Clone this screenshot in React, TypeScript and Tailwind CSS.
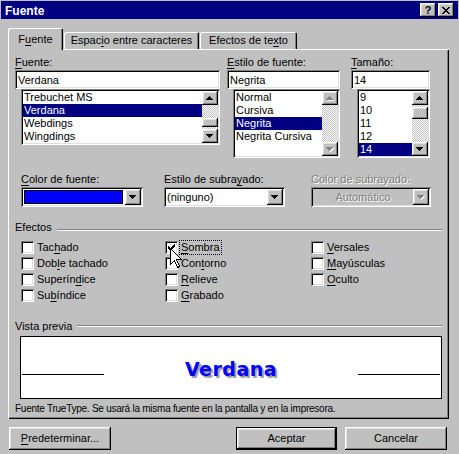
import React from 'react'

// classic 3D borders
const raised = 'shadow-[inset_-1px_-1px_#000,inset_1px_1px_#fff,inset_-2px_-2px_#808080,inset_2px_2px_#dfdfdf]'
const sunken = 'shadow-[inset_1px_1px_#808080,inset_-1px_-1px_#fff,inset_2px_2px_#000,inset_-2px_-2px_#dfdfdf]'
const dither = 'bg-[image:repeating-conic-gradient(#c0c0c0_0_25%,#fff_0_50%)] bg-[length:2px_2px]'
const grayed = 'text-[#808080] [text-shadow:1px_1px_0_#fff]'

function U({ children }: { children: React.ReactNode }) {
  return <span className="underline decoration-1 underline-offset-[2px]">{children}</span>
}

function Tri({ up = false, disabled = false }: { up?: boolean; disabled?: boolean }) {
  const d = up
    ? 'M3 0h1v1H3zM2 1h3v1H2zM1 2h5v1H1zM0 3h7v1H0z'
    : 'M0 0h7v1H0zM1 1h5v1H1zM2 2h3v1H2zM3 3h1v1H3z'
  return (
    <svg width="8" height="5" viewBox="0 0 8 5" shapeRendering="crispEdges">
      {disabled && <path d={d} transform="translate(1 1)" fill="#fff" />}
      <path d={d} fill={disabled ? '#808080' : '#000'} />
    </svg>
  )
}

function ScrollBtn({ up = false, disabled = false }: { up?: boolean; disabled?: boolean }) {
  return (
    <div className={`w-[16px] h-[14px] shrink-0 bg-[#c0c0c0] flex items-center justify-center ${raised}`}>
      <Tri up={up} disabled={disabled} />
    </div>
  )
}

function Thumb({ h }: { h: string }) {
  return <div className={`w-[16px] shrink-0 bg-[#c0c0c0] ${h} ${raised}`} />
}

function ListBox({
  items,
  selected,
  className,
  children,
}: {
  items: string[]
  selected: string
  className: string
  children: React.ReactNode
}) {
  return (
    <div className={`flex p-[2px] bg-white ${sunken} ${className}`}>
      <div className="flex-1 min-w-0 overflow-hidden">
        {items.map((it) => (
          <div
            key={it}
            className={`h-[13px] pl-[1px] whitespace-nowrap ${it === selected ? 'bg-[#000080] text-white' : ''}`}
          >
            {it}
          </div>
        ))}
      </div>
      <div className="w-[16px] flex flex-col">{children}</div>
    </div>
  )
}

function Field({ children, className }: { children: React.ReactNode; className: string }) {
  return (
    <div className={`h-[19px] bg-white flex items-center pl-[3px] pt-[1px] ${sunken} ${className}`}>{children}</div>
  )
}

function Combo({
  children,
  disabled = false,
  className,
}: {
  children: React.ReactNode
  disabled?: boolean
  className: string
}) {
  return (
    <div className={`h-[20px] flex p-[2px] ${disabled ? 'bg-[#c0c0c0]' : 'bg-white'} ${sunken} ${className}`}>
      <div className="flex-1 min-w-0 flex items-center">{children}</div>
      <div className={`w-[16px] shrink-0 bg-[#c0c0c0] flex items-center justify-center ${raised}`}>
        <Tri disabled={disabled} />
      </div>
    </div>
  )
}

function Check({ label, checked = false, focus = false }: { label: React.ReactNode; checked?: boolean; focus?: boolean }) {
  return (
    <div className="flex items-center h-[13px]">
      <div className={`w-[13px] h-[13px] shrink-0 bg-white flex items-center justify-center ${sunken}`}>
        {checked && (
          <svg width="7" height="7" viewBox="0 0 7 7" shapeRendering="crispEdges">
            <path
              d="M6 0h1v1H6zM5 1h2v1H5zM0 2h1v1H0zM4 2h3v1H4zM0 3h2v1H0zM3 3h3v1H3zM0 4h5v1H0zM1 5h3v1H1zM2 6h1v1H2z"
              fill="#000"
            />
          </svg>
        )}
      </div>
      <span className={`ml-[2px] px-[1px] leading-[13px] ${focus ? 'outline outline-1 outline-dotted outline-black' : ''}`}>
        {label}
      </span>
    </div>
  )
}

function GroupHead({ title, line }: { title: string; line: string }) {
  return (
    <div className="flex h-[13px]">
      <span>{title}</span>
      <div className={`flex-1 h-[2px] border-t border-t-[#808080] border-b border-b-white ${line}`} />
    </div>
  )
}

export default function App() {
  return (
    <div className="relative w-[459px] h-[454px] overflow-hidden bg-[#c0c0c0] text-black text-[11px] leading-[13px] font-['Liberation_Sans',Arial,sans-serif]">
      {/* title bar */}
      <div className="mt-[1px] ml-[1px] w-[457px] h-[18px] bg-[#000080] flex items-center pl-[4px] pr-[4px]">
        <span className="pt-[2px] text-white font-bold text-[12px]">Fuente</span>
        <div className="ml-auto flex gap-[2px]">
          <div className={`w-[16px] h-[14px] bg-[#c0c0c0] flex items-center justify-center font-bold text-[11px] ${raised}`}>
            ?
          </div>
          <div className={`w-[16px] h-[14px] bg-[#c0c0c0] flex items-center justify-center ${raised}`}>
            <svg width="8" height="7" viewBox="0 0 8 7" shapeRendering="crispEdges">
              <path
                d="M0 0h2v1H0zM6 0h2v1H6zM1 1h2v1H1zM5 1h2v1H5zM2 2h4v1H2zM3 3h2v1H3zM2 4h4v1H2zM1 5h2v1H1zM5 5h2v1H5zM0 6h2v1H0zM6 6h2v1H6z"
                fill="#000"
              />
            </svg>
          </div>
        </div>
      </div>

      {/* tabs */}
      <div className="mt-[9px] h-[21px] flex items-end pl-[8px]">
        <div className="relative z-10 -mb-[1px] w-[55px] h-[22px] bg-[#c0c0c0] rounded-t-[2px] pt-[5px] text-center shadow-[inset_1px_1px_#fff,inset_-1px_0_#000,inset_-2px_0_#808080]">
          F<U>u</U>ente
        </div>
        <div className="ml-[1px] w-[135px] h-[17px] rounded-t-[2px] pt-[2px] text-center shadow-[inset_1px_1px_#fff,inset_-1px_0_#000,inset_-2px_0_#808080]">
          Espac<U>i</U>o entre caracteres
        </div>
        <div className="ml-[1px] w-[97px] h-[17px] rounded-t-[2px] pt-[2px] text-center shadow-[inset_1px_1px_#fff,inset_-1px_0_#000,inset_-2px_0_#808080]">
          Efectos de te<U>x</U>to
        </div>
      </div>

      {/* tab page */}
      <div className="ml-[8px] w-[441px] h-[370px] pt-[7px] pl-[7px] pr-[7px] shadow-[inset_1px_1px_#fff,inset_-1px_-1px_#000,inset_-2px_-2px_#808080]">
        <div className="flex">
          <div className="w-[205px]">
            <div className="h-[13px]">
              <U>F</U>uente:
            </div>
            <Field className="mt-[1px] w-[205px]">Verdana</Field>
            <ListBox
              className="ml-[6px] w-[199px] h-[56px]"
              items={['Trebuchet MS', 'Verdana', 'Webdings', 'Wingdings']}
              selected="Verdana"
            >
              <ScrollBtn up />
              <div className={`h-[13px] ${dither}`} />
              <Thumb h="h-[9px]" />
              <div className={`flex-1 ${dither}`} />
              <ScrollBtn />
            </ListBox>
          </div>

          <div className="ml-[7px] w-[113px]">
            <div className="h-[13px]">
              <U>E</U>stilo de fuente:
            </div>
            <Field className="mt-[1px] w-[113px]">Negrita</Field>
            <ListBox
              className="ml-[6px] w-[107px] h-[69px]"
              items={['Normal', 'Cursiva', 'Negrita', 'Negrita Cursiva']}
              selected="Negrita"
            >
              <ScrollBtn up disabled />
              <div className={`flex-1 ${dither}`} />
              <ScrollBtn disabled />
            </ListBox>
          </div>

          <div className="ml-[11px] w-[79px]">
            <div className="h-[13px]">
              <U>T</U>amaño:
            </div>
            <Field className="mt-[1px] w-[79px]">14</Field>
            <ListBox className="ml-[6px] w-[73px] h-[69px]" items={['9', '10', '11', '12', '14']} selected="14">
              <ScrollBtn up />
              <div className={`h-[2px] ${dither}`} />
              <Thumb h="h-[12px]" />
              <div className={`flex-1 ${dither}`} />
              <ScrollBtn />
            </ListBox>
          </div>
        </div>

        {/* colour / underline */}
        <div className="mt-[15px] flex">
          <div className="ml-[6px] w-[122px]">
            <div className="h-[13px]">
              <U>C</U>olor de fuente:
            </div>
            <Combo className="mt-[1px]">
              <div className="ml-[1px] mr-[2px] w-full h-[14px] bg-[#0000ff] border border-black" />
            </Combo>
          </div>
          <div className="ml-[21px] w-[121px]">
            <div className="h-[13px]">
              Estilo de subra<U>y</U>ado:
            </div>
            <Combo className="mt-[1px]">
              <span className="pl-[1px]">(ninguno)</span>
            </Combo>
          </div>
          <div className="ml-[26px] w-[120px]">
            <div className={`h-[13px] ${grayed}`}>Color de subrayado:</div>
            <Combo className="mt-[1px]" disabled>
              <span className={`w-full text-center ${grayed}`}>Automático</span>
            </Combo>
          </div>
        </div>

        {/* effects */}
        <div className="mt-[14px]">
          <GroupHead title="Efectos" line="ml-[5px] mt-[8px]" />
        </div>
        <div className="mt-[7px] ml-[6px] flex">
          <div className="w-[144px] flex flex-col gap-[3px]">
            <Check label={<>Tac<U>h</U>ado</>} />
            <Check label={<>Dob<U>l</U>e tachado</>} />
            <Check label={<>Superín<U>d</U>ice</>} />
            <Check label={<>Su<U>b</U>índice</>} />
          </div>
          <div className="w-[146px] flex flex-col gap-[3px]">
            <Check label={<><U>S</U>ombra</>} checked focus />
            <Check label={<>Con<U>t</U>orno</>} />
            <Check label={<><U>R</U>elieve</>} />
            <Check label={<><U>G</U>rabado</>} />
          </div>
          <div className="flex flex-col gap-[3px]">
            <Check label={<><U>V</U>ersales</>} />
            <Check label={<><U>M</U>ayúsculas</>} />
            <Check label={<><U>O</U>culto</>} />
          </div>
        </div>

        {/* preview */}
        <div className="mt-[18px]">
          <GroupHead title="Vista previa" line="ml-[5px] mt-[5px]" />
        </div>
        <div className="mt-[3px] ml-[5px] w-[422px] h-[63px] bg-white border border-black flex items-end px-[1px] pb-[19px]">
          <div className="w-[82px] h-px bg-black mb-[4px]" />
          <div className="flex-1 text-center font-['DejaVu_Sans',Verdana,sans-serif] font-bold text-[19px] leading-[19px] tracking-[0.5px] text-[#0000ff] [text-shadow:2px_2px_0_#a0a0a0]">
            Verdana
          </div>
          <div className="w-[82px] h-px bg-black mb-[4px]" />
        </div>
        <div className="mt-[3px] text-[10px] tracking-[-0.25px]">
          Fuente TrueType. Se usará la misma fuente en la pantalla y en la impresora.
        </div>
      </div>

      {/* buttons */}
      <div className="mt-[8px] flex">
        <div className={`ml-[9px] w-[102px] h-[23px] flex items-center justify-center ${raised}`}>
          <span>
            <U>P</U>redeterminar...
          </span>
        </div>
        <div className="ml-[125px] w-[101px] h-[23px] flex items-center justify-center shadow-[inset_0_0_0_1px_#000,inset_-2px_-2px_#000,inset_2px_2px_#fff,inset_-3px_-3px_#808080,inset_3px_3px_#dfdfdf]">
          Aceptar
        </div>
        <div className={`ml-[8px] w-[102px] h-[23px] flex items-center justify-center ${raised}`}>Cancelar</div>
      </div>

      {/* mouse pointer over the Sombra box */}
      <svg className="absolute left-[170px] top-[248px]" width="13" height="21" viewBox="0 0 13 21" shapeRendering="crispEdges">
        <path d="M0.5 0.5V16.5L4.5 12.5L7.5 19.5L9.5 18.5L6.5 11.5H11.5Z" fill="#fff" stroke="#000" strokeWidth="1" />
      </svg>
    </div>
  )
}
